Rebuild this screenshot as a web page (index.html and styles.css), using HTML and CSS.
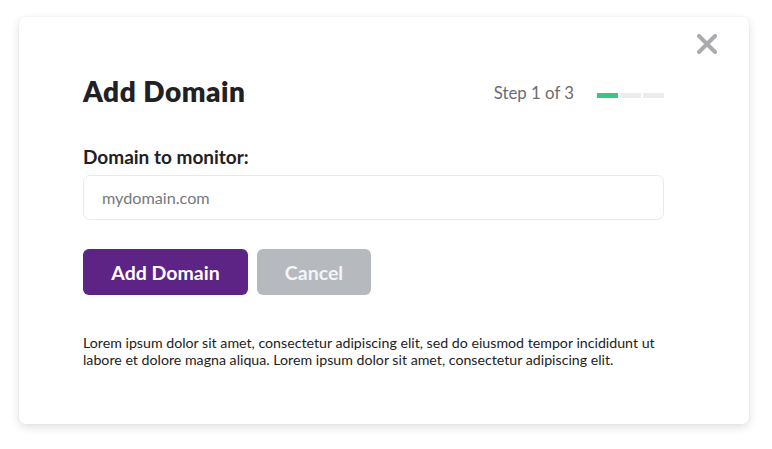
FILE: index.html
```html
<!DOCTYPE html>
<html>
<head>
<meta charset="utf-8">
<link rel="stylesheet" href="styles.css">
</head>
<body>
<div class="stage">
  <div class="modal">
    <button class="close" aria-label="Close">
      <svg width="22" height="20" viewBox="0 0 22 20"><path d="M3 2 L19 18 M19 2 L3 18" stroke="#a9abae" stroke-width="4" stroke-linecap="round" fill="none"/></svg>
    </button>
    <div class="head">
      <h1 class="title">Add Domain</h1>
      <div class="step">
        <span class="step-text">Step 1 of 3</span>
        <div class="bar">
          <span class="seg active"></span>
          <span class="seg"></span>
          <span class="seg"></span>
        </div>
      </div>
    </div>
    <label class="label">Domain to monitor:</label>
    <input class="input" type="text" placeholder="mydomain.com">
    <div class="actions">
      <button class="btn primary">Add Domain</button>
      <button class="btn cancel">Cancel</button>
    </div>
    <p class="note">Lorem ipsum dolor sit amet, consectetur adipiscing elit, sed do eiusmod tempor incididunt ut labore et dolore magna aliqua. Lorem ipsum dolor sit amet, consectetur adipiscing elit.</p>
  </div>
</div>
</body>
</html>
```

FILE: styles.css
```css
html, body {
  margin: 0;
  padding: 0;
  background: #ffffff;
}
body {
  font-family: "Lato", "Noto Sans", sans-serif;
  width: 772px;
  height: 449px;
  overflow: hidden;
}
.stage {
  padding: 17px 23px 0 19px;
}
.modal {
  position: relative;
  box-sizing: border-box;
  width: 730px;
  height: 407px;
  background: #fff;
  border-radius: 7px;
  box-shadow: 0 3px 10px rgba(0,0,0,0.13), 0 0 2px rgba(0,0,0,0.06);
  padding: 0 85px 0 64px;
  display: flex;
  flex-direction: column;
}
.close {
  position: absolute;
  top: 17px;
  left: 677px;
  width: 22px;
  height: 20px;
  padding: 0;
  border: 0;
  background: none;
  display: block;
}
.close svg { display: block; }
.head {
  display: flex;
  align-items: center;
  justify-content: space-between;
  margin-top: 56px;
  height: 36px;
}
.title {
  margin: 0;
  font-size: 28px;
  font-weight: 800;
  color: #1f2124;
  letter-spacing: 0.5px;
}
.step {
  display: flex;
  align-items: center;
  gap: 23px;
  margin-top: 2px;
}
.step-text {
  font-size: 16.8px;
  color: #6a6c70;
}
.bar {
  display: flex;
  gap: 2px;
  margin-top: 6px;
}
.seg {
  display: block;
  width: 21px;
  height: 5px;
  background: #ececee;
}
.seg.active { background: #3cc486; }
.label {
  margin-top: 37px;
  font-size: 19px;
  font-weight: 700;
  color: #1f2124;
  line-height: 22px;
}
.input {
  margin-top: 7px;
  box-sizing: border-box;
  width: 581px;
  height: 45px;
  border: 1px solid #e9eaec;
  border-radius: 7px;
  padding: 0 18px;
  font-family: inherit;
  font-size: 16.2px;
  color: #333;
  outline: none;
}
.input::placeholder { color: #76787c; }
.actions {
  display: flex;
  gap: 9px;
  margin-top: 29px;
}
.btn {
  height: 46px;
  border: 0;
  border-radius: 6px;
  font-family: inherit;
  font-size: 19.5px;
  font-weight: 700;
  color: #fff;
  padding: 0;
}
.primary {
  width: 165px;
  background: #5e2485;
}
.cancel {
  width: 114px;
  background: #b6b9be;
  color: #f4f5f6;
}
.note {
  margin: 39px 0 0;
  font-size: 14.2px;
  line-height: 17px;
  color: #222;
}
```
